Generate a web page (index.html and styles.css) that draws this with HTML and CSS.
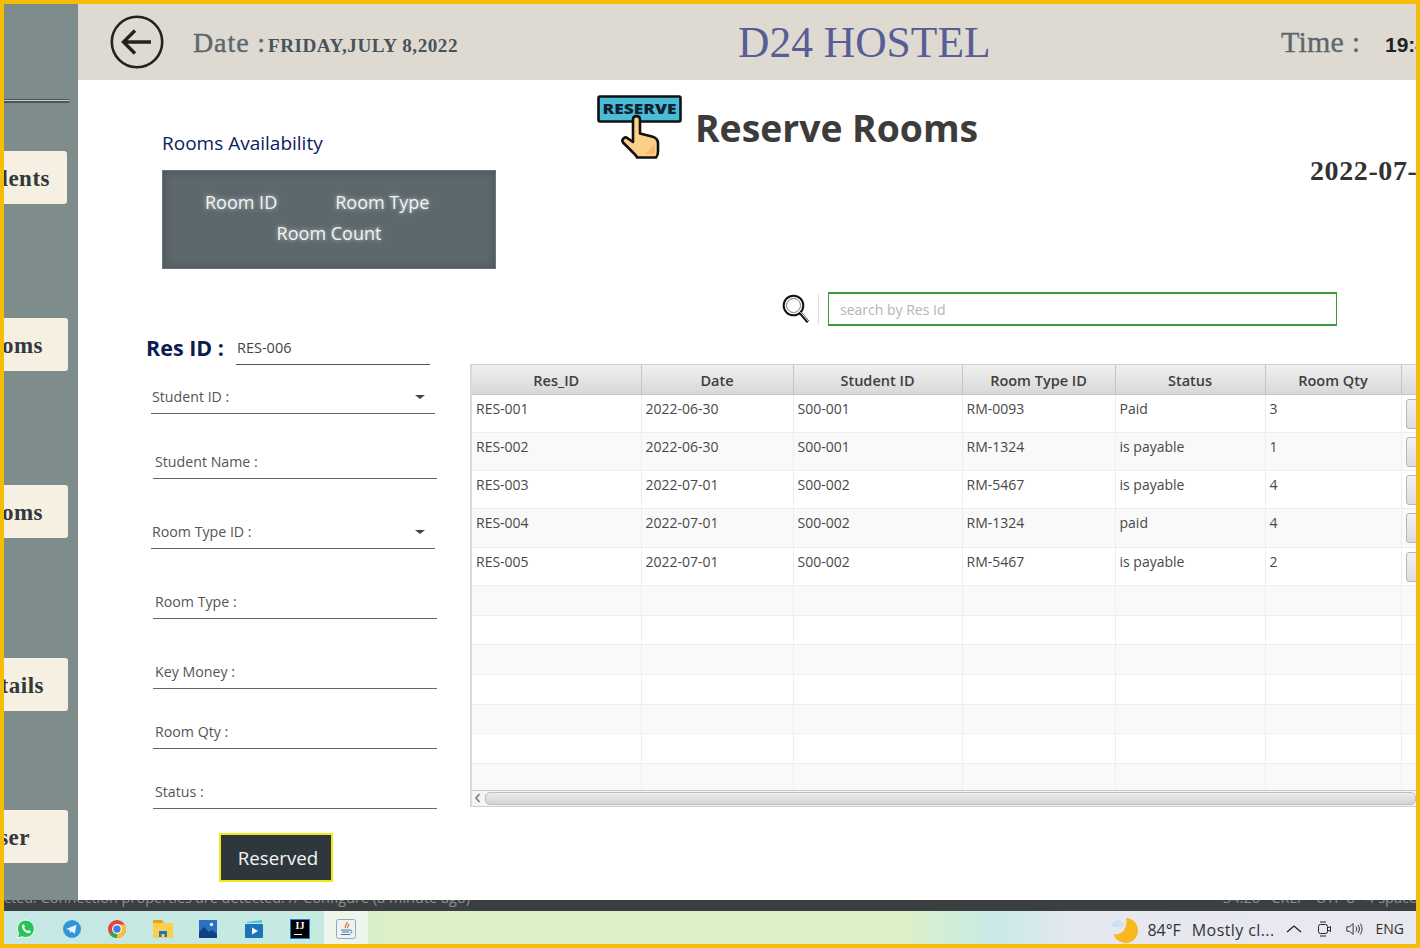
FILE: index.html
```html
<!DOCTYPE html>
<html lang="en">
<head>
    <meta charset="UTF-8">
    <title>D24 Hostel - Reserve Rooms</title>
    <link rel="stylesheet" href="styles.css">
</head>
<body>
    <div class="screen">
        <div class="app">
            <aside class="sidebar">
                <div class="side-rule"></div>
                <button class="side-btn first">Students</button>
                <button class="side-btn second">Rooms</button>
                <button class="side-btn third">Rooms</button>
                <button class="side-btn fourth">Details</button>
                <button class="side-btn fifth">User</button>
            </aside>
            <div class="content">
                <header class="topbar">
                    <svg class="back-icon" viewBox="0 0 54 54">
                        <circle cx="27" cy="27" r="25.2" fill="none" stroke="#222" stroke-width="2.6"/>
                        <path d="M41 27H14M25 15.500L13.500 27L25 38.500" fill="none" stroke="#222" stroke-width="3.400"/>
                    </svg>
                    <div class="date-text">Date : <b>FRIDAY,JULY 8,2022</b></div>
                    <div class="brand">D24 HOSTEL</div>
                    <div class="time-text">Time : <b>19:42:10</b></div>
                </header>
                <main class="page">
                    <section class="top-row">
                        <div class="avail">
                            <h3>Rooms Availability</h3>
                            <div class="avail-panel">
                                <div class="avail-cols"><span>Room ID</span><span>Room Type</span></div>
                                <div class="avail-count">Room Count</div>
                            </div>
                        </div>
                        <svg class="reserve-icon" viewBox="0 0 86 64">
                            <rect x="1.500" y="1.500" width="82" height="25" rx="1.500" fill="#48bcd8" stroke="#111" stroke-width="2.600"/>
                            <text x="42.500" y="19" text-anchor="middle" textLength="74" lengthAdjust="spacingAndGlyphs" class="reserve-word">RESERVE</text>
                            <path d="M36 24.500c0-4.500 7-4.500 7 0v14l12 3c4 1 6 3 6 7v8c0 3-1 5-2 6H40c-1-3-3-4-5-6l-9-9c-2-3 2-7 5-4l5 3.500z" fill="#fdd089" stroke="#111" stroke-width="2.600" stroke-linejoin="round"/>
                            <path d="M47 59h10c1-3 1-7 0-10-3 5-6 8-10 10z" fill="#f6b968"/>
                        </svg>
                        <h1 class="page-title">Reserve Rooms</h1>
                        <div class="today">2022-07-08</div>
                    </section>

                    <section class="search-row">
                        <svg class="search-icon" viewBox="0 0 28 30">
                            <circle cx="11.500" cy="11.500" r="9.800" fill="#fff" stroke="#111" stroke-width="2"/>
                            <circle cx="11.500" cy="11.500" r="7" fill="none" stroke="#777" stroke-width="1"/>
                            <path d="M18 18.500L26 28" stroke="#111" stroke-width="3.200"/>
                            <path d="M18.500 18L26.500 27.500" stroke="#fff" stroke-width="1"/>
                        </svg>
                        <div class="search-sep"></div>
                        <div class="search-box">search by Res Id</div>
                    </section>

                    <section class="lower">
                        <form class="res-form">
                            <div class="res-id">
                                <label>Res ID :</label>
                                <div class="res-value">RES-006</div>
                            </div>
                            <div class="field combo gap-s">Student ID :<i class="caret"></i></div>
                            <div class="field gap-m">Student Name :</div>
                            <div class="field combo gap-l">Room Type ID :<i class="caret"></i></div>
                            <div class="field gap-l">Room Type :</div>
                            <div class="field gap-l">Key Money :</div>
                            <div class="field gap-n">Room Qty :</div>
                            <div class="field gap-n">Status :</div>
                            <button type="button" class="reserved-btn">Reserved</button>
                        </form>

                        <div class="table-wrap">
                            <table class="res-table">
                                <colgroup>
                                    <col class="c1"><col class="c2"><col class="c3"><col class="c4"><col class="c5"><col class="c6"><col class="c7">
                                </colgroup>
                                <thead>
                                    <tr><th>Res_ID</th><th>Date</th><th>Student ID</th><th>Room Type ID</th><th>Status</th><th>Room Qty</th><th></th></tr>
                                </thead>
                                <tbody>
                                    <tr><td>RES-001</td><td>2022-06-30</td><td>S00-001</td><td>RM-0093</td><td>Paid</td><td>3</td><td><span class="row-btn"></span></td></tr>
                                    <tr><td>RES-002</td><td>2022-06-30</td><td>S00-001</td><td>RM-1324</td><td>is payable</td><td>1</td><td><span class="row-btn"></span></td></tr>
                                    <tr><td>RES-003</td><td>2022-07-01</td><td>S00-002</td><td>RM-5467</td><td>is payable</td><td>4</td><td><span class="row-btn"></span></td></tr>
                                    <tr><td>RES-004</td><td>2022-07-01</td><td>S00-002</td><td>RM-1324</td><td>paid</td><td>4</td><td><span class="row-btn"></span></td></tr>
                                    <tr><td>RES-005</td><td>2022-07-01</td><td>S00-002</td><td>RM-5467</td><td>is payable</td><td>2</td><td><span class="row-btn"></span></td></tr>
                                    <tr class="empty"><td></td><td></td><td></td><td></td><td></td><td></td><td></td></tr>
                                    <tr class="empty"><td></td><td></td><td></td><td></td><td></td><td></td><td></td></tr>
                                    <tr class="empty"><td></td><td></td><td></td><td></td><td></td><td></td><td></td></tr>
                                    <tr class="empty"><td></td><td></td><td></td><td></td><td></td><td></td><td></td></tr>
                                    <tr class="empty"><td></td><td></td><td></td><td></td><td></td><td></td><td></td></tr>
                                    <tr class="empty"><td></td><td></td><td></td><td></td><td></td><td></td><td></td></tr>
                                    <tr class="empty last"><td></td><td></td><td></td><td></td><td></td><td></td><td></td></tr>
                                </tbody>
                            </table>
                            <div class="h-scroll">
                                <div class="scroll-arrow"><svg viewBox="0 0 8 10"><path d="M5.500 1L2 5l3.500 4" fill="none" stroke="#777" stroke-width="1.500"/></svg></div>
                                <div class="scroll-thumb"></div>
                            </div>
                        </div>
                    </section>
                </main>
            </div>
        </div>

        <div class="ide-status">
            <span class="ide-left">Detected. Connection properties are detected. // Configure (a minute ago)</span>
            <span class="ide-right">34:26 &nbsp; CRLF &nbsp; UTF-8 &nbsp; 4 spaces</span>
        </div>

        <footer class="taskbar">
            <div class="task-icons">
                <svg class="task-icon" viewBox="0 0 20 20">
                    <path d="M10 1a8.800 8.800 0 0 0-7.500 13.400L1.300 19l4.700-1.200A8.800 8.800 0 1 0 10 1z" fill="#25c55a" stroke="#fff" stroke-width="1"/>
                    <path d="M7 5.500c-1.500 1-1.500 3 0 5s4 3.800 5.800 3.800c1.200 0 2-1 2-2l-2.300-1.200-1 1c-1.500-.6-2.800-2-3.400-3.300l.9-1L8 5.500z" fill="#fff"/>
                </svg>
                <svg class="task-icon" viewBox="0 0 20 20">
                    <circle cx="10" cy="10" r="9" fill="#2f95d6"/>
                    <path d="M4 10l10.500-4.300-1.700 9-3.200-2.300-1.600 1.600-.4-3z" fill="#e9f5fb"/>
                </svg>
                <svg class="task-icon" viewBox="0 0 20 20">
                    <circle cx="10" cy="10" r="9" fill="#e2453a"/>
                    <path d="M10 10L2.200 14.500A9 9 0 0 0 10 19z" fill="#35a853"/>
                    <path d="M10 10v9a9 9 0 0 0 7.800-13.500H10z" fill="#fbc02d"/>
                    <circle cx="10" cy="10" r="4.300" fill="#3f7fe8" stroke="#fff" stroke-width="1.200"/>
                </svg>
                <svg class="task-icon" viewBox="0 0 20 20">
                    <path d="M0 1h9l2 3H0z" fill="#e8a40c"/>
                    <path d="M0 4h20v15H0z" fill="#fbcf4e"/>
                    <path d="M6 18v-6h8v6h-2.500v-3h-3v3z" fill="#1e78c8"/>
                </svg>
                <svg class="task-icon" viewBox="0 0 20 20">
                    <rect x="1" y="1" width="18" height="18" fill="#2a72c0"/>
                    <path d="M1 19v-6l5-5 5 5 3-2 5 4v4z" fill="#123f85"/>
                    <circle cx="13.500" cy="5.500" r="1.800" fill="#d8ecfb"/>
                </svg>
                <svg class="task-icon" viewBox="0 0 20 20">
                    <path d="M3 3l15-2v3H3z" fill="#4fc3e8"/>
                    <rect x="1" y="5" width="18" height="14" rx="1" fill="#1c74b8"/>
                    <path d="M8 8.500l6 3.500-6 3.500z" fill="#fff"/>
                </svg>
                <div class="idea-icon"><span>IJ</span><i></i></div>
                <div class="java-tile">
                    <svg class="task-icon" viewBox="0 0 20 20">
                        <rect x=".5" y=".5" width="19" height="19" rx="2" fill="#eef2f5" stroke="#9aa5ad"/>
                        <path d="M11 3c1 2-3 3-1.500 6M13 5c0 2-2 2-1.500 4" fill="none" stroke="#e0752a" stroke-width="1.300"/>
                        <path d="M5 11h9M6 13h7M5 15.500h9" stroke="#4a78a8" stroke-width="1.100"/>
                        <path d="M14 11c2.500 0 2.500 3 0 3" fill="none" stroke="#4a78a8"/>
                    </svg>
                </div>
            </div>
            <div class="tray">
                <svg class="moon" viewBox="0 0 28 28">
                    <path d="M16 3A12.500 12.500 0 1 1 3.500 19C12 21 18 13 16 3z" fill="#fbb81e"/>
                    <path d="M1 10a3 3 0 0 1 3-3 4.500 4.500 0 0 1 8 .5 2.500 2.500 0 0 1 1 4.500H3a2.500 2.500 0 0 1-2-2z" fill="#cfe0f0"/>
                </svg>
                <span class="weather">84°F</span>
                <span class="weather wide">Mostly cl...</span>
                <svg class="tray-icon chev" viewBox="0 0 16 10"><path d="M1 8l7-6 7 6" fill="none" stroke="#222" stroke-width="1.300"/></svg>
                <svg class="tray-icon cam" viewBox="0 0 18 18">
                    <rect x="2.500" y="4.500" width="9" height="9" rx="2" fill="none" stroke="#222"/>
                    <path d="M11.500 8l3-1.500v5l-3-1.500M4 2h6M4 16h6" fill="none" stroke="#222"/>
                </svg>
                <svg class="tray-icon" viewBox="0 0 20 18">
                    <path d="M2 6.500h3L9 3v12l-4-3.500H2z" fill="none" stroke="#222"/>
                    <path d="M12 6c1.500 2 1.500 4 0 6M14.500 4.500c2 3 2 6 0 9M17 3c2.500 4 2.500 8 0 12" fill="none" stroke="#222"/>
                </svg>
                <span class="lang">ENG</span>
            </div>
        </footer>
    </div>
</body>
</html>
```

FILE: styles.css
```css
* {
    box-sizing: border-box;
}
html, body {
    margin: 0;
    height: 100%;
    overflow: hidden;
    background: #f4be08;
}
body {
    font-family: "Open Sans", Arial, sans-serif;
    color: #444;
}
.screen {
    margin: 4px 4px 4px 4px;
    height: 940px;
    display: flex;
    flex-direction: column;
    overflow: hidden;
    background: #fff;
}
.app {
    display: flex;
    height: 896px;
    overflow: hidden;
}

/* sidebar */
.sidebar {
    width: 74px;
    flex: none;
    background: #7f8c8c;
    padding-top: 95px;
}
.side-rule {
    width: 65px;
    height: 4px;
    border-top: 1px solid #4c5658;
    border-bottom: 2px solid #4c5658;
    background: #c8cfcf;
}
.side-btn {
    display: flex;
    justify-content: flex-end;
    align-items: center;
    width: 64px;
    height: 53px;
    padding: 2px 18px 0 0;
    border: none;
    border-radius: 0 3px 3px 0;
    background: #f6f0e3;
    color: #33383c;
    font-family: "Liberation Serif", serif;
    font-weight: bold;
    font-size: 23px;
    letter-spacing: .5px;
    overflow: hidden;
    white-space: nowrap;
}
.side-btn.first { margin-top: 48px; width: 63px; padding-right: 17px; }
.side-btn.second { margin-top: 114px; padding-right: 25px; }
.side-btn.third { margin-top: 114px; padding-right: 25px; }
.side-btn.fourth { margin-top: 120px; padding-right: 24px; }
.side-btn.fifth { margin-top: 99px; padding-right: 38px; }

/* top bar */
.content {
    flex: 1;
    min-width: 0;
}
.topbar {
    height: 76px;
    background: #dedad2;
    display: flex;
    align-items: center;
    font-family: "Liberation Serif", serif;
    white-space: nowrap;
    overflow: hidden;
}
.back-icon {
    width: 54px;
    height: 54px;
    margin-left: 32px;
    flex: none;
}
.date-text {
    flex: none;
    width: 545px;
    margin-left: 29px;
    padding-top: 2px;
    font-size: 28px;
    letter-spacing: .9px;
    color: #5d676b;
    -webkit-text-stroke: .4px #5d676b;
}
.date-text b {
    margin-left: -6px;
    font-size: 19.200px;
    letter-spacing: .5px;
    color: #4a5357;
    -webkit-text-stroke: 0;
}
.brand {
    flex: none;
    width: 543px;
    font-size: 43.500px;
    color: #585d96;
}
.time-text {
    flex: none;
    font-size: 30px;
    letter-spacing: .2px;
    color: #5d676b;
    -webkit-text-stroke: .3px #5d676b;
}
.time-text b {
    margin-left: 17px;
    font-family: "Liberation Sans", sans-serif;
    font-size: 21px;
    letter-spacing: 0;
    color: #222;
    -webkit-text-stroke: 0;
}

/* page */
.page {
    height: 820px;
    overflow: hidden;
}
.top-row {
    display: flex;
    height: 212px;
    white-space: nowrap;
}
.avail {
    width: 334px;
    margin-left: 84px;
    flex: none;
}
.avail h3 {
    margin: 47px 0 11px;
    font-size: 19px;
    line-height: 32px;
    font-weight: 400;
    color: #0f2060;
}
.avail-panel {
    height: 99px;
    padding-top: 16px;
    background: #5c686c;
    border: 1px solid #6a7579;
    box-shadow: inset 0 0 8px #475256;
    color: #f2f4f4;
    font-size: 18px;
    line-height: 31px;
    text-shadow: 0 0 4px #c8d2d2;
}
.avail-cols {
    display: flex;
    gap: 58px;
    padding-left: 42px;
}
.avail-count {
    text-align: center;
}
.reserve-icon {
    width: 86px;
    height: 64px;
    margin: 15px 0 0 101px;
    flex: none;
}
.reserve-word {
    font-family: "Open Sans", sans-serif;
    font-weight: 800;
    font-size: 14.500px;
    fill: #10202c;
}
.page-title {
    margin: 22px 0 0 12px;
    width: 615px;
    flex: none;
    font-size: 37.300px;
    line-height: 52px;
    font-weight: 700;
    color: #3e3b3b;
}
.today {
    margin-top: 73px;
    font-family: "Liberation Serif", serif;
    font-weight: bold;
    font-size: 28px;
    letter-spacing: .6px;
    line-height: 36px;
    color: #333;
}

/* search */
.search-row {
    display: flex;
    align-items: center;
    height: 34px;
    padding-left: 704px;
}
.search-icon {
    width: 28px;
    height: 30px;
    flex: none;
}
.search-sep {
    width: 1px;
    height: 30px;
    margin: 0 9px 0 8px;
    background: #dcdcdc;
}
.search-box {
    width: 509px;
    height: 34px;
    padding-left: 11px;
    border: 1px solid #3c9a3c;
    border-width: 2px 1px 2px 1px;
    color: #b4b4b4;
    font-size: 14px;
    line-height: 31px;
}

/* form */
.lower {
    display: flex;
    padding-top: 5px;
}
.res-form {
    width: 392px;
    flex: none;
    padding-left: 68px;
}
.res-id {
    display: flex;
    align-items: flex-start;
    height: 38px;
}
.res-id label {
    width: 90px;
    font-size: 21.500px;
    line-height: 34px;
    font-weight: 700;
    color: #0c1c50;
    flex: none;
}
.res-value {
    width: 194px;
    height: 34px;
    padding-left: 1px;
    border-bottom: 1px solid #555;
    font-size: 14.500px;
    line-height: 33px;
    color: #444;
}
.field {
    position: relative;
    width: 284px;
    height: 30px;
    margin-left: 7px;
    padding-left: 2px;
    border-bottom: 1px solid #666;
    font-size: 14.200px;
    line-height: 25px;
    color: #555;
}
.field.combo {
    margin-left: 5px;
    padding-left: 1px;
}
.gap-s { margin-top: 15px; }
.gap-m { margin-top: 35px; }
.gap-l { margin-top: 40px; }
.gap-n { margin-top: 30px; }
.caret {
    position: absolute;
    right: 10px;
    top: 11px;
    border-left: 5px solid transparent;
    border-right: 5px solid transparent;
    border-top: 4px solid #444;
}
.reserved-btn {
    display: block;
    width: 114px;
    height: 49px;
    margin: 24px 0 0 73px;
    border: 2px solid #f0ea10;
    background: #2e383c;
    color: #f4f4f4;
    font-family: "Open Sans", sans-serif;
    font-size: 18.700px;
    padding: 0 0 0 4px;
}

/* table */
.table-wrap {
    flex: 1;
    min-width: 0;
    height: 443px;
    margin-top: 33px;
    overflow: hidden;
    border-top: 1px solid #cfcfcf;
    border-left: 2px solid #d8d8d8;
}
.res-table {
    width: 1000px;
    table-layout: fixed;
    border-collapse: collapse;
    font-size: 14px;
    color: #484848;
}
.c1 { width: 169px; }
.c2 { width: 152px; }
.c3 { width: 169px; }
.c4 { width: 153px; }
.c5 { width: 150px; }
.c6 { width: 136px; }
.c7 { width: 71px; }
.res-table th {
    height: 29px;
    padding: 2px 0 0 0;
    background: linear-gradient(#f0f0f0, #d8d8d8);
    border-right: 1px solid #c4c4c4;
    border-bottom: 1px solid #c8c8c8;
    color: #3f3f3f;
    font-size: 14.500px;
    font-weight: 600;
}
.res-table td {
    height: 38.300px;
    padding: 4px 0 0 4px;
    vertical-align: top;
    border-right: 1px solid #eeeeee;
    border-bottom: 1px solid #eeeeee;
    line-height: 20px;
    overflow: hidden;
}
.res-table tbody tr:nth-child(even) td {
    background: #f9f9f9;
}
.res-table .empty td {
    height: 29.700px;
    padding: 0;
}
.res-table .empty.last td {
    height: 26px;
    border-bottom: none;
}
.row-btn {
    display: block;
    width: 60px;
    height: 30px;
    border: 1px solid #b8b8b8;
    border-radius: 3px;
    background: linear-gradient(#f2f2f2, #dcdcdc);
}
.h-scroll {
    display: flex;
    height: 17px;
    align-items: stretch;
    background: #f4f4f4;
    border-top: 1px solid #c8c8c8;
    border-bottom: 1px solid #d0d0d0;
}
.scroll-arrow {
    width: 13px;
    padding: 2px 2px;
}
.scroll-arrow svg {
    display: block;
    width: 8px;
    height: 10px;
}
.scroll-thumb {
    flex: 1;
    margin: 1px 0;
    border: 1px solid #bdbdbd;
    border-radius: 5px;
    background: linear-gradient(#ececec, #d4d4d4);
}

/* ide status + taskbar */
.ide-status {
    display: flex;
    justify-content: space-between;
    height: 11px;
    background: #3c3f41;
    color: #8b8f92;
    font-size: 14.500px;
    line-height: 20px;
    white-space: nowrap;
    overflow: hidden;
}
.ide-left, .ide-right {
    margin-top: -12px;
}
.ide-left {
    margin-left: -32px;
}
.ide-right {
    margin-right: -8px;
}
.taskbar {
    display: flex;
    justify-content: space-between;
    height: 33px;
    background: linear-gradient(90deg, #c5e8e6 0, #c6e9e0 22%, #dcf0c8 27%, #dcf0c8 64%, #c8eae8 70%, #e6e8f0 76%, #e8e8f0 100%);
}
.task-icons {
    display: flex;
    align-items: center;
    padding: 2px 0 0 12px;
    gap: 25.500px;
}
.task-icon {
    display: block;
    width: 20px;
    height: 20px;
    flex: none;
}
.idea-icon {
    position: relative;
    width: 20px;
    height: 20px;
    margin-left: 1px;
    background: #000;
    border: 1px solid #1a7fe0;
    color: #fff;
    font-family: "Liberation Serif", serif;
    font-weight: bold;
    font-size: 10px;
    line-height: 12px;
    text-align: center;
}
.idea-icon i {
    position: absolute;
    left: 3px;
    bottom: 3px;
    width: 8px;
    height: 1px;
    background: #fff;
}
.java-tile {
    display: flex;
    align-items: center;
    justify-content: center;
    width: 44px;
    height: 33px;
    margin: -2px 0 0 -12px;
    padding-top: 2px;
    background: #edf6ea;
}
.tray {
    display: flex;
    align-items: center;
    padding: 5px 12px 0 0;
    color: #333;
    font-size: 16px;
}
.moon {
    width: 28px;
    height: 28px;
    margin: -3px 9px 0 0;
}
.weather.wide {
    margin-left: 11px;
    letter-spacing: .4px;
}
.tray-icon {
    width: 18px;
    height: 18px;
    margin-left: 11px;
    margin-top: -3px;
}
.tray-icon.chev {
    margin-left: 11px;
    height: 12px;
    width: 16px;
}
.tray-icon.cam {
    margin-left: 14px;
}
.lang {
    margin: -3px 0 0 13px;
    font-size: 14px;
}
```
